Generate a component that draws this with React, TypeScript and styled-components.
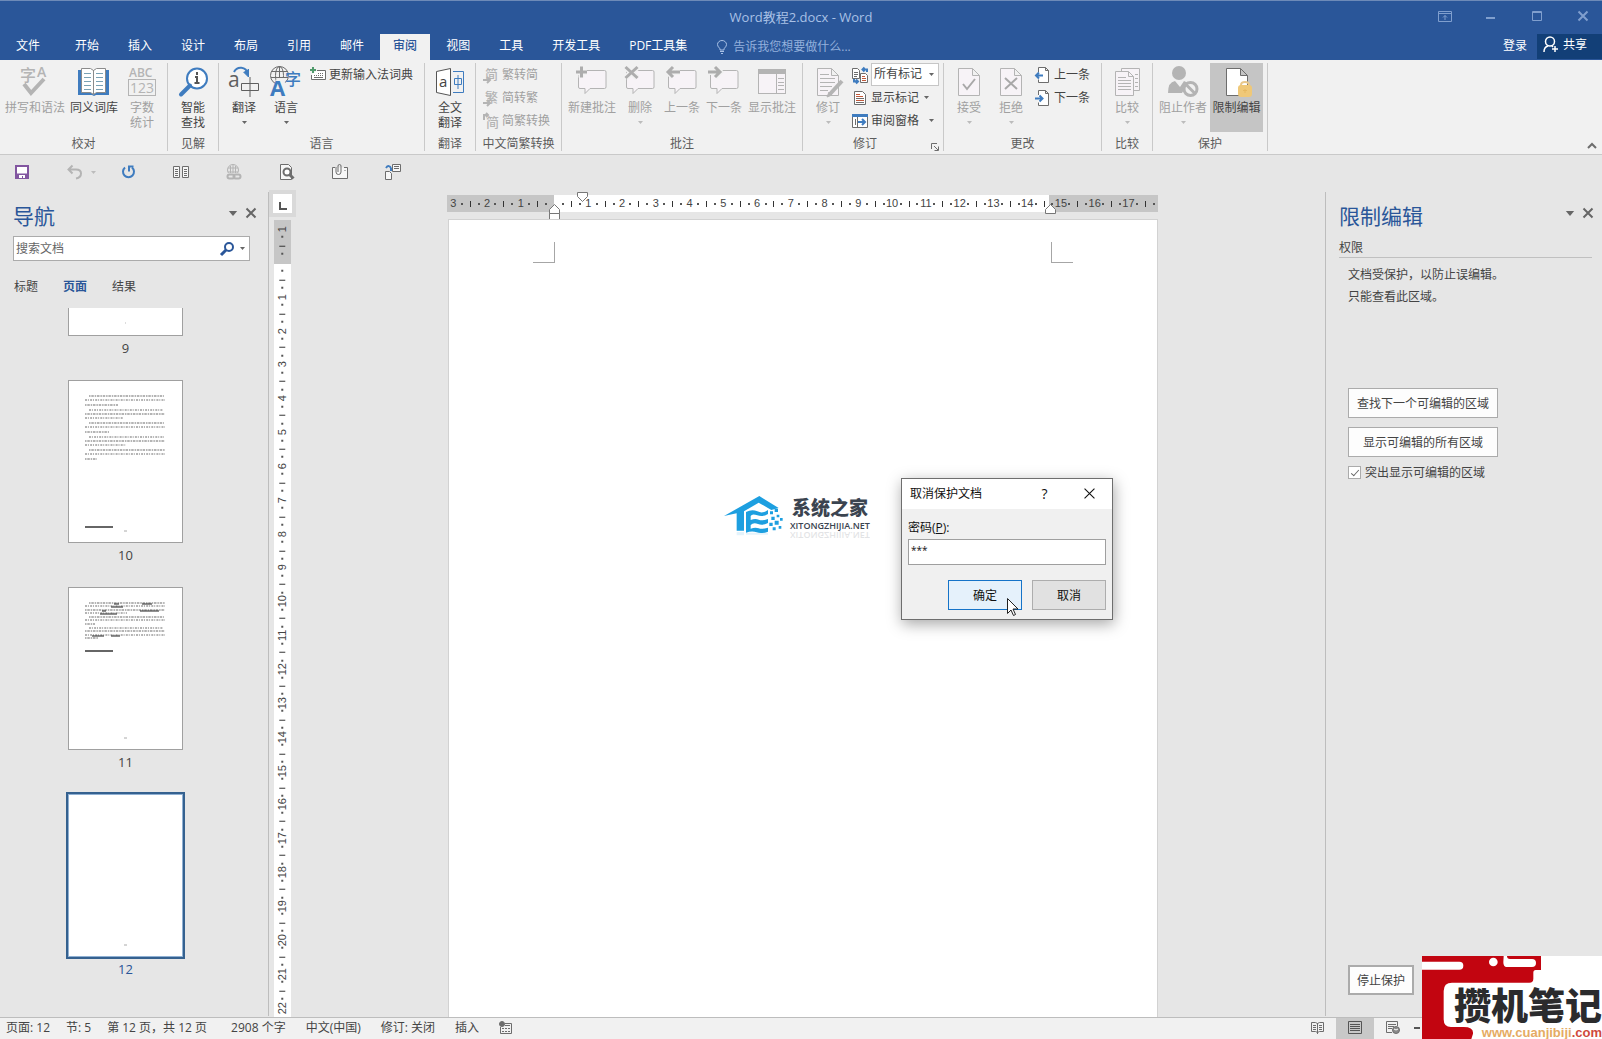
import React from "react";
import styled, { createGlobalStyle, css } from "styled-components";

const color = {
  brand: "#2a5699",
  brandDark: "#123f77",
  ribbon: "#f1f1f1",
  canvas: "#e6e6e6",
  line: "#c9c9c9",
  text: "#444444",
  muted: "#a0a0a0",
  icon: "#6d6d6d",
  iconOff: "#b4b4b4",
  blue: "#3f7cbf",
};

const uiFont = `"Open Sans", "Noto Sans CJK SC", sans-serif`;

const GlobalStyle = createGlobalStyle`
  *, *::before, *::after { box-sizing: border-box; }
  body { margin: 0; background: ${color.canvas}; }
  body, button, input, select { font-family: ${uiFont}; font-size: 12px; color: ${color.text}; }
  button { border: 0; padding: 0; background: none; line-height: 15px; }
  h1, h2, p, ul { margin: 0; padding: 0; font-weight: 400; }
  svg { display: block; flex: none; overflow: visible; }
`;

const Window = styled.div`
  position: relative;
  display: flex;
  flex-direction: column;
  height: 100vh;
  overflow: hidden;
  line-height: 15px;
`;

/* ---------- title bar and tabs ---------- */

const TitleBar = styled.header`
  display: grid;
  grid-template-columns: 1fr auto 1fr;
  align-items: center;
  height: 34px;
  flex: none;
  background: ${color.brand};
  border-top: 1px solid #6d8ab8;
`;

const WindowTitle = styled.h1`
  grid-column: 2;
  font-size: 13px;
  color: #a9c1e6;
`;

const WindowButtons = styled.div`
  display: flex;
  gap: 8px;
  justify-self: end;
  margin-bottom: 3px;
`;

const WindowButton = styled.button`
  display: grid;
  place-items: center;
  width: 38px;
  height: 28px;
  color: #809fce;
`;

const TabBar = styled.nav`
  display: flex;
  gap: 3px;
  height: 26px;
  flex: none;
  background: ${color.brand};
`;

const Tab = styled.button<{ $active?: boolean; $file?: boolean }>`
  height: 26px;
  padding: 0 13px 4px;
  color: #fff;
  ${(p) => p.$file && css`padding: 0 19px 4px 16px;`}
  ${(p) => p.$active && css`background: ${color.ribbon}; color: ${color.brand}; font-weight: 500;`}
`;

const TellMe = styled.label`
  display: flex;
  gap: 6px;
  padding: 0 0 1px 14px;
  align-items: center;
  color: #a9c1e6;
`;

const TellMeInput = styled.input`
  width: 140px;
  padding: 0;
  border: 0;
  outline: 0;
  background: transparent;
  &::placeholder { color: #93b0dc; }
`;

const Account = styled.div`
  display: flex;
  gap: 10px;
  margin-left: auto;
`;

const LoginButton = styled.button`
  padding-bottom: 4px;
  color: #fff;
`;

const ShareButton = styled.button`
  display: flex;
  gap: 4px;
  align-items: center;
  width: 65px;
  height: 25px;
  padding: 0 0 4px 6px;
  background: ${color.brandDark};
  color: #fff;
`;

/* ---------- ribbon ---------- */

const Ribbon = styled.section`
  display: flex;
  flex: none;
  height: 95px;
  background: ${color.ribbon};
  border-bottom: 1px solid ${color.line};
`;

const GroupBox = styled.div<{ $w: number }>`
  display: grid;
  grid-template-rows: 69px 15px;
  row-gap: 4px;
  width: ${(p) => p.$w}px;
  margin: 3px 0;
  border-right: 1px solid ${color.line};
`;

const GroupBody = styled.div<{ $pad?: number; $center?: boolean }>`
  display: flex;
  padding-left: ${(p) => p.$pad ?? 0}px;
  justify-content: ${(p) => (p.$center ? "center" : "flex-start")};
`;

const GroupFooter = styled.div`
  display: flex;
  align-items: center;
  color: #5c5c5c;
`;

const GroupTitle = styled.span`
  flex: 1;
  text-align: center;
  white-space: nowrap;
`;

const Launcher = styled.button`
  display: grid;
  place-items: end center;
  width: 16px;
  height: 15px;
  color: ${color.icon};
`;

const BigButton = styled.button<{ $wide?: number; $pressed?: boolean }>`
  display: flex;
  flex-direction: column;
  align-items: center;
  width: ${(p) => p.$wide ?? 42}px;
  height: 69px;
  padding-top: 3px;
  gap: 2px;
  white-space: nowrap;
  color: ${color.text};
  background: ${(p) => (p.$pressed ? "#c5c5c5" : "transparent")};
  &:disabled { color: ${color.muted}; }
`;

const ArrowSlot = styled.span`
  display: grid;
  place-items: center;
  height: 11px;
`;

const SmallStack = styled.div`
  display: flex;
  flex-direction: column;
`;

const SmallRow = styled.div`
  display: flex;
  align-items: center;
  gap: 3px;
  height: 23px;
  padding-left: 3px;
`;

const SmallButton = styled.button<{ $spread?: boolean }>`
  display: flex;
  align-items: center;
  gap: 3px;
  height: 23px;
  padding-left: 3px;
  white-space: nowrap;
  ${(p) => p.$spread && css`width: 85px;`}
  > :nth-child(3) { margin-left: ${(p) => (p.$spread ? "auto" : "2px")}; }
  &:disabled { color: ${color.muted}; }
`;

const SelectBox = styled.span`
  display: grid;
  align-items: center;
  width: 68px;
  height: 23px;
  > * { grid-area: 1 / 1; }
  > svg { justify-self: end; margin-right: 5px; pointer-events: none; }
`;

const MarkupSelect = styled.select`
  appearance: none;
  width: 68px;
  height: 23px;
  padding: 0 0 2px 2px;
  border: 1px solid #c6c6c6;
  border-radius: 0;
  background: #fff;
`;

const CollapseButton = styled.button`
  align-self: flex-end;
  margin-left: auto;
  padding: 5px;
  color: ${color.icon};
`;

/* ---------- quick access ---------- */

const QuickAccess = styled.div`
  display: flex;
  flex: none;
  height: 35px;
  padding: 0 0 1px 10px;
  align-items: center;
`;

const QuickItem = styled.div`
  display: flex;
  width: 53px;
`;

const QuickButton = styled.button<{ $narrow?: boolean }>`
  display: grid;
  place-items: center;
  width: ${(p) => (p.$narrow ? 12 : 24)}px;
  height: 24px;
`;

/* ---------- work area ---------- */

const Workspace = styled.main`
  display: grid;
  grid-template-columns: 269px 27px minmax(0, 1fr) 277px;
  flex: 1;
  min-height: 0;
`;

const NavPane = styled.aside`
  display: flex;
  flex-direction: column;
  min-height: 0;
  margin: 2px 0 1px;
  padding-left: 13px;
  border-right: 1px solid #bdbdbd;
`;

const PaneHead = styled.div<{ $inset: number }>`
  display: flex;
  align-items: flex-start;
  gap: 8px;
  padding: 9px ${(p) => p.$inset}px 0 0;
`;

const PaneTitle = styled.h2`
  flex: 1;
  font-size: 21px;
  line-height: 30px;
  color: ${color.brand};
`;

const PaneButton = styled.button`
  display: grid;
  place-items: center;
  height: 24px;
  color: #666;
`;

const SearchBox = styled.label`
  display: flex;
  align-items: center;
  gap: 5px;
  width: 237px;
  height: 25px;
  margin-top: 5px;
  padding: 0 4px 0 2px;
  border: 1px solid #ababab;
  background: #fff;
`;

const SearchInput = styled.input`
  flex: 1;
  min-width: 0;
  padding: 0;
  border: 0;
  outline: 0;
  &::placeholder { color: #666; }
`;

const NavTabs = styled.div`
  display: flex;
  gap: 25px;
  padding: 18px 0 14px 1px;
`;

const NavTab = styled.button<{ $active?: boolean }>`
  ${(p) => p.$active && css`color: ${color.brand}; font-weight: 700;`}
`;

const Thumbs = styled.ul`
  display: flex;
  flex-direction: column;
  align-items: center;
  flex: 1;
  min-height: 0;
  padding-right: 30px;
  overflow: hidden;
  list-style: none;
`;

const Thumb = styled.li<{ $current?: boolean }>`
  display: flex;
  flex-direction: column;
  flex: none;
  align-items: center;
  height: ${(p) => (p.$current ? "auto" : "207px")};
  font-size: 13px;
  line-height: 25px;
  color: ${(p) => (p.$current ? color.brand : color.text)};
  &:first-child { height: 72px; }
`;

const Sheet = styled.div<{ $cut?: boolean; $current?: boolean }>`
  width: 115px;
  height: ${(p) => (p.$cut ? 28 : 163)}px;
  background: #fff;
  border: 1px solid #a0a0a0;
  ${(p) => p.$cut && css`border-top: 0;`}
  ${(p) => p.$current && css`border-color: #8fb0d3; outline: 2px solid #35618f;`}
`;

const RulerColumn = styled.div`
  display: flex;
  flex-direction: column;
  align-items: center;
  gap: 3px;
  min-height: 0;
`;

const TabSelector = styled.button`
  display: grid;
  place-items: end center;
  flex: none;
  width: 27px;
  height: 27px;
  padding-bottom: 3px;
  border: 4px solid #d9d9d9;
  background: #fff;
`;

const VerticalRuler = styled.div`
  display: grid;
  grid-auto-rows: minmax(0, 1fr);
  flex: 1;
  min-height: 0;
  width: 17px;
  padding: 5px 0;
  background: linear-gradient(#c6c6c6 44px, #fff 44px);
`;

const HorizontalRuler = styled.div`
  position: relative;
  display: grid;
  grid-auto-flow: column;
  grid-auto-columns: minmax(0, 1fr);
  height: 17px;
  padding-left: 2px;
  background: linear-gradient(90deg, #c6c6c6 107px, #fff 107px, #fff 602px, #c6c6c6 602px);
`;

const Mark = styled.span<{ $turn?: boolean }>`
  display: flex;
  align-items: center;
  justify-content: center;
  min-width: 0;
  min-height: 0;
  font: 11px/11px "Liberation Sans", sans-serif;
  color: #444;
  ${(p) => p.$turn && css`transform: rotate(-90deg);`}
`;

const Dot = styled.i`
  width: 2px;
  height: 2px;
  background: #555;
`;

const Tick = styled.i`
  flex: none;
  width: 1px;
  height: 6px;
  background: #333;
`;

const Indent = styled.svg<{ $x: number; $y: number }>`
  position: absolute;
  left: ${(p) => p.$x}px;
  top: ${(p) => p.$y}px;
`;

const DocArea = styled.div`
  display: flex;
  flex-direction: column;
  align-items: center;
  min-height: 0;
  padding: 5px 16px 0 0;
`;

const DocColumn = styled.div`
  display: flex;
  flex-direction: column;
  flex: 1;
  gap: 7px;
  width: 711px;
`;

const Paper = styled.div`
  position: relative;
  display: flex;
  justify-content: space-between;
  align-items: flex-start;
  flex: 1;
  margin-left: 1px;
  padding: 22px 84px 0;
  background: #fff;
  border: 1px solid #d2d2d2;
  border-bottom: 0;
`;

const Corner = styled.span<{ $left?: boolean }>`
  width: 22px;
  height: 21px;
  border: 0 solid #a6a6a6;
  border-bottom-width: 1px;
  ${(p) => (p.$left ? "border-right-width: 1px;" : "border-left-width: 1px;")}
`;

const Watermark = styled.div`
  position: absolute;
  left: 275px;
  top: 276px;
  display: flex;
  gap: 6px;
  align-items: flex-start;
`;

const WatermarkText = styled.div`
  display: flex;
  flex-direction: column;
  align-items: center;
  color: #3b4450;
`;

const WatermarkName = styled.strong`
  font-size: 19px;
  line-height: 24px;
  font-weight: 900;
`;

const WatermarkSite = styled.span<{ $mirror?: boolean }>`
  font-size: 9px;
  line-height: 9px;
  font-weight: 600;
  margin-top: 1px;
  ${(p) => p.$mirror && css`transform: scaleY(-1); opacity: 0.14;`}
`;

/* ---------- protection pane ---------- */

const ProtectPane = styled.aside`
  display: flex;
  flex-direction: column;
  margin: 2px 0 1px;
  padding-left: 13px;
  border-left: 1px solid #bdbdbd;
`;

const SectionTitle = styled.h2`
  margin: 8px 10px 0 0;
  padding-bottom: 1px;
  border-bottom: 1px solid #c0c0c0;
  font-size: 12px;
  line-height: 17px;
`;

const PaneBody = styled.div`
  display: flex;
  flex-direction: column;
  align-items: flex-start;
  flex: 1;
  padding: 6px 0 21px 9px;
`;

const Note = styled.p`
  height: 124px;
  line-height: 22px;
`;

const PaneAction = styled.button<{ $strong?: boolean }>`
  width: 150px;
  height: 30px;
  margin-bottom: 9px;
  border: 1px solid #ababab;
  background: #fdfdfd;
  ${(p) => p.$strong && css`width: 66px; margin: auto 0 0; border-width: 2px;`}
`;

const CheckLabel = styled.label`
  display: flex;
  align-items: center;
  gap: 4px;
  line-height: 12px;
`;

const CheckBox = styled.input`
  appearance: none;
  display: grid;
  place-items: center;
  width: 13px;
  height: 13px;
  margin: 0;
  border: 1px solid #ababab;
  background: #fff;
  &:checked::after {
    content: "";
    width: 4px;
    height: 8px;
    margin-bottom: 2px;
    border: solid #666;
    border-width: 0 1px 1px 0;
    transform: rotate(42deg);
  }
`;

/* ---------- status bar ---------- */

const StatusBar = styled.footer`
  display: flex;
  flex: none;
  align-items: center;
  gap: 24px;
  height: 22px;
  padding-left: 6px;
  background: ${color.ribbon};
  border-top: 1px solid #bdbdbd;
  white-space: nowrap;
`;

const StatusGroup = styled.div<{ $gap: number }>`
  display: flex;
  align-items: center;
  gap: ${(p) => p.$gap}px;
  padding-bottom: 3px;
`;

const ViewButtons = styled.div`
  display: flex;
  align-items: center;
  margin-left: auto;
  padding-right: 180px;
`;

const ViewButton = styled.button<{ $active?: boolean; $small?: boolean }>`
  display: grid;
  place-items: center;
  width: ${(p) => (p.$small ? 10 : 38)}px;
  height: 21px;
  padding-bottom: 2px;
  background: ${(p) => (p.$active ? "#c8c8c8" : "transparent")};
`;

/* ---------- dialog ---------- */

const Dialog = styled.form`
  position: absolute;
  left: 901px;
  top: 478px;
  width: 212px;
  border: 1px solid #6e6e6e;
  background: #f0f0f0;
  box-shadow: 1px 4px 14px rgba(0, 0, 0, 0.35);
  color: #111;
`;

const DialogHead = styled.div`
  display: flex;
  align-items: center;
  height: 30px;
  padding: 0 9px 2px 8px;
  background: #fff;
`;

const DialogTitle = styled.h2`
  flex: 1;
  font-size: 12px;
`;

const DialogIcon = styled.button`
  display: grid;
  place-items: center;
  width: 27px;
  height: 24px;
  margin-left: 18px;
  font-size: 14px;
  color: #111;
`;

const DialogBody = styled.div`
  display: flex;
  flex-direction: column;
  padding: 11px 6px 9px;
`;

const PasswordInput = styled.input`
  height: 26px;
  margin: 4px 0 15px;
  padding: 0 2px 5px;
  border: 1px solid #9f9f9f;
  border-radius: 0;
  outline: 0;
  font-size: 10px;
  color: #111;
`;

const DialogActions = styled.div`
  display: flex;
  justify-content: flex-end;
  gap: 10px;
`;

const DialogButton = styled.button<{ $primary?: boolean }>`
  width: 74px;
  height: 30px;
  border: 1px solid ${(p) => (p.$primary ? "#1573c8" : "#adadad")};
  background: ${(p) => (p.$primary ? "#e5f1fb" : "#e1e1e1")};
  color: #111;
`;

const Pointer = styled.svg`
  position: absolute;
  left: 1006px;
  top: 597px;
`;

/* ---------- corner badge ---------- */

const Badge = styled.div`
  position: absolute;
  right: 0;
  bottom: 0;
  display: grid;
  width: 180px;
  height: 83px;
  overflow: hidden;
  background: #fff;
  > * { grid-area: 1 / 1; }
`;

const BadgeText = styled.div`
  display: flex;
  flex-direction: column;
  align-items: flex-end;
  padding-top: 29px;
  white-space: nowrap;
`;

const BadgeName = styled.strong`
  font-size: 37px;
  line-height: 41px;
  font-weight: 900;
  color: #2b2b2d;
`;

const BadgeSite = styled.span`
  font: 700 13px/14px "Liberation Sans", sans-serif;
  color: #e5ab63;
  > b { color: #cf4a3c; }
`;

/* ---------- icons ---------- */

type GlyphProps = { size?: number; children: React.ReactNode; off?: boolean };

const Glyph = ({ size = 32, off, children }: GlyphProps) => (
  <svg
    width={size}
    height={size}
    viewBox={`0 0 ${size} ${size}`}
    fill="none"
    stroke={off ? color.iconOff : color.icon}
    strokeWidth="1"
    aria-hidden="true"
  >
    {children}
  </svg>
);

const T = ({ x, y, s, f, w, children }: { x: number; y: number; s: number; f: string; w?: number; children: string }) => (
  <text x={x} y={y} fontSize={s} fill={f} stroke="none" fontWeight={w ?? 400} fontFamily={uiFont}>
    {children}
  </text>
);

const Down = ({ off, big }: { off?: boolean; big?: boolean }) => (
  <svg width={big ? 10 : 5} height={big ? 5 : 3} viewBox="0 0 10 6" aria-hidden="true">
    <path d="M0 0h10L5 6z" fill={off ? "#bcbcbc" : "#666"} />
  </svg>
);

const Cross = ({ size = 10, width = 2 }: { size?: number; width?: number }) => (
  <svg width={size} height={size} viewBox="0 0 10 10" stroke="currentColor" strokeWidth={width} aria-hidden="true">
    <path d="M.5.5l9 9M9.5.5l-9 9" />
  </svg>
);

const SpellIcon = () => (
  <Glyph off>
    <T x={1} y={15} s={16} f={color.iconOff} w={500}>字</T>
    <T x={18} y={11} s={14} f={color.iconOff} w={600}>A</T>
    <path d="M5 18l7 9 13-14" strokeWidth="4" />
  </Glyph>
);

const BookIcon = () => (
  <Glyph>
    <path d="M0 4h31v25H18l-2 1-2-1H0z" fill={color.blue} stroke="none" />
    <path d="M3.5 2.5h9l3 2 3-2h9v24h-9l-3 2-3-2h-9z" fill="#fff" stroke="#8b8b8b" />
    <path d="M15.5 4v24" stroke="#8b8b8b" />
    <path d="M6 7.500h7M6 11.500h7M6 15.500h7M6 19.500h7M6 23.500h7M18 7.500h7M18 11.500h7M18 15.500h7M18 19.500h7M18 23.500h7" stroke="#7aa2b5" />
  </Glyph>
);

const CountIcon = () => (
  <Glyph off>
    <T x={3} y={11} s={12} f={color.iconOff} w={600}>ABC</T>
    <rect x="2.500" y="13.500" width="27" height="16" />
    <T x={4} y={27} s={14} f={color.iconOff}>123</T>
  </Glyph>
);

const SmartIcon = () => (
  <Glyph>
    <circle cx="20" cy="12.500" r="10" stroke={color.blue} strokeWidth="2" fill="#fff" />
    <path d="M13 19.500L4 28.500" stroke={color.blue} strokeWidth="4" strokeLinecap="round" />
    <path d="M20 6v3M18 11h2v6M17.500 17h5" stroke="#555" strokeWidth="2" />
  </Glyph>
);

const TranslateIcon = () => (
  <Glyph>
    <T x={0} y={21} s={21} f="#5f5f5f">a</T>
    <path d="M13.500 17.500h17v7h-17zM22 11v20" stroke="#5f5f5f" />
    <path d="M6 6c3-6 12-6 14 2" stroke={color.blue} strokeWidth="2" />
    <path d="M15.500 6l5 5V3" fill={color.blue} stroke={color.blue} />
  </Glyph>
);

const LanguageIcon = () => (
  <Glyph>
    <circle cx="9.500" cy="9.500" r="9" />
    <ellipse cx="9.500" cy="9.500" rx="4" ry="9" />
    <path d="M2 5.500h15M1 11.500h17M9.500 .5v16" />
    <path d="M7 12h7l4 19H0z" fill={color.ribbon} stroke="none" />
    <T x={15} y={19} s={16} f={color.blue} w={500}>字</T>
    <T x={0} y={30} s={22} f={color.blue} w={700}>A</T>
  </Glyph>
);

const KeyboardIcon = () => (
  <Glyph size={16}>
    <path d="M7 3.500h8.500v9h-14V8" fill="#fff" />
    <path d="M4 10.500h9M4 8.500h1M6 8.500h1M8 8.500h1M10 8.500h1M12 8.500h1M8 6.500h1M10 6.500h1M12 6.500h1" />
    <path d="M0 3h6M3 0v6" stroke="#4f9a6b" strokeWidth="2" />
  </Glyph>
);

const FullTranslateIcon = () => (
  <Glyph>
    <path d="M2.500 5.500l14-3v27l-14-3z" fill="#fff" stroke="#555" />
    <T x={5} y={21} s={15} f="#444">a</T>
    <path d="M19 5.500h10.500v21H19" stroke={color.blue} />
    <path d="M20.500 12.500h7v6h-7zM24 9v14" stroke={color.blue} />
  </Glyph>
);

const HanIcon = ({ mark, swap }: { mark: string; swap?: boolean }) => (
  <Glyph size={16} off>
    <T x={swap ? 3 : 2} y={swap ? 14 : 12} s={13} f={color.iconOff} w={500}>{mark}</T>
    {swap ? (
      <path d="M1 7V2h4M3 0l2 2-2 2" strokeWidth="2" />
    ) : (
      <path d="M0 13h7M4 10l3 3-3 3" strokeWidth="2" />
    )}
  </Glyph>
);

const CommentIcon = ({ kind }: { kind: "new" | "del" | "prev" | "next" }) => {
  const marks = {
    new: "M0 6h11M5.500 0.500v11",
    del: "M1.500 1l12 11M13.500 1l-12 11",
    prev: "M2 6h12M7 1L2 6l5 5",
    next: "M0 6h12M7 1l5 5-5 5",
  };
  return (
    <Glyph off>
      <path d="M3.500 4.500h25q1.500 0 1.500 1.500v15q0 1.500-1.500 1.500H14l-5 5v-5H4q-1.500 0-1.500-1.500V6q0-1.500 1-1.500z" fill="#f7f3f7" />
      <path d={marks[kind]} stroke={color.ribbon} strokeWidth="6" />
      <path d={marks[kind]} stroke="#adadad" strokeWidth="3" />
    </Glyph>
  );
};

const ShowCommentsIcon = () => (
  <Glyph off>
    <rect x="2.500" y="3.500" width="27" height="24" fill="#f7f3f7" />
    <path d="M2 5.500h28" strokeWidth="5" />
    <path d="M20.500 8v19M22 12.500h6M22 16.500h6M22 19.500h6M22 23.500h6" />
  </Glyph>
);

const docShape = "M5.500 2.500h14l7 7v20h-21zM19.500 2.500v7h7";

const TrackIcon = () => (
  <Glyph off>
    <path d={docShape} fill="#f7f3f7" />
    <path d="M8 8.500h9M8 12.500h15M8 16.500h15M8 20.500h12M8 24.500h8" />
    <path d="M30 15L18 28" strokeWidth="4" />
    <path d="M17 26l-2 5 5-2z" fill={color.iconOff} />
  </Glyph>
);

const VerdictIcon = ({ ok }: { ok?: boolean }) => (
  <Glyph off>
    <path d={docShape} fill="#f7f3f7" />
    <path d={ok ? "M10 18l4 5 8-10" : "M10 12l12 11M22 12L10 23"} stroke="#a8a8a8" strokeWidth="2" />
  </Glyph>
);

const CompareIcon = () => (
  <Glyph off>
    <path d="M10.500 2.500h18v22h-18z" fill="#f7f3f7" />
    <path d="M4.500 5.500h13l5 5v19h-18zM17.500 5.500v5h5" fill="#f7f3f7" />
    <path d="M7 11.500h8M7 14.500h13M7 17.500h13M7 20.500h13M7 23.500h13M24 8.500h3M24 12.500h3M24 16.500h3M24 20.500h3" />
  </Glyph>
);

const BlockIcon = () => (
  <Glyph off>
    <circle cx="12" cy="7" r="7" fill={color.iconOff} stroke="none" />
    <path d="M1 27q0-11 7-12l5 6 4-6 4 2-6 10z" fill={color.iconOff} stroke="none" />
    <circle cx="23.500" cy="23" r="6.500" fill={color.ribbon} strokeWidth="3" />
    <path d="M19 18.500l9 9" strokeWidth="3" />
  </Glyph>
);

const RestrictIcon = () => (
  <Glyph>
    <path d={docShape} fill="#fff" />
    <path d="M20 20v-1q0-3 4-3t4 3v1" stroke="#e9c88a" strokeWidth="2" />
    <rect x="17" y="19" width="14" height="12" rx="3" fill="#efc878" stroke="none" />
    <path d="M24 23v4M22 24.500h4" stroke="#e6b860" />
  </Glyph>
);

const MarkupIcon = () => (
  <Glyph size={16}>
    <path d="M.5 1.500h5l2 2v8h-7zM8.500 6.500h5l2 2v7h-7z" fill="#fff" />
    <path d="M2 5.500h4M2 7.500h4M2 9.500h3" />
    <path d="M10 9.500h3M10 11.500h4M10 13.500h4" stroke="#c0583a" />
    <path d="M15 5V2.500h-4M12.500.5l-2 2 2 2M2 12v2.500h3M4 12.500l2 2-2 2" stroke={color.blue} strokeWidth="2" />
  </Glyph>
);

const ShowMarkupIcon = () => (
  <Glyph size={16}>
    <path d="M2.500 1.500h8l3 3v10h-11z" fill="#fff" />
    <path d="M4 4.500h4M4 6.500h7M4 10.500h8" stroke="#c0583a" />
    <path d="M4 8.500h8M4 12.500h8" />
  </Glyph>
);

const PaneIcon = () => (
  <Glyph size={16}>
    <path d="M.5 1.500h15v13H.5z" fill="#fff" />
    <path d="M0 2.500h16" stroke={color.blue} strokeWidth="3" />
    <path d="M3.500 6v6M5.500 4v10" />
    <path d="M6 9h7M10 6l3 3-3 3" stroke={color.blue} strokeWidth="2" />
  </Glyph>
);

const ChangeIcon = ({ next }: { next?: boolean }) => (
  <Glyph size={16}>
    <path d="M3.500 5V.5h7l3 3v12h-10v-3M10.500.5v3h3" fill="#fff" />
    <path d={next ? "M0 8.500h7M4.500 5.500l3 3-3 3" : "M1 8.500h7M4 5.500l-3 3 3 3"} stroke={color.blue} strokeWidth="2" />
  </Glyph>
);

const LauncherIcon = () => (
  <Glyph size={8}>
    <path d="M.5 6V.5H6M3 3l4 4M7.500 3.500v4h-4" />
  </Glyph>
);

const SearchIcon = () => (
  <Glyph size={16}>
    <circle cx="10" cy="6" r="4" stroke={color.brand} strokeWidth="2" />
    <path d="M7 9l-5 5" stroke={color.brand} strokeWidth="3" />
  </Glyph>
);

const quickIcons: Record<string, React.ReactNode> = {
  保存: (
    <Glyph size={16}>
      <path d="M2 2h12v12H2z" fill="#fff" stroke="#8256a0" strokeWidth="2" />
      <path d="M2 9.500h12V14H2z" fill="#8256a0" stroke="none" />
      <path d="M5 11h6v3H9v-2H8v2H5z" fill="#fff" stroke="none" />
    </Glyph>
  ),
  重复: (
    <Glyph size={16}>
      <path d="M5 3.500a5.500 5.500 0 1 0 7 0" stroke={color.blue} strokeWidth="2" />
      <path d="M13.500 2.500H9v5" stroke={color.blue} strokeWidth="2" />
    </Glyph>
  ),
  并排: (
    <Glyph size={16}>
      <path d="M.5 2.500h6v11h-6zM9.500 2.500h6v11h-6z" fill="#f7f7f7" />
      <path d="M2 5.500h3M2 7.500h3M2 9.500h3M2 11.500h3M11 5.500h3M11 7.500h3M11 9.500h3M11 11.500h3" />
    </Glyph>
  ),
  超链接: (
    <Glyph size={16} off>
      <circle cx="7" cy="6" r="5.500" />
      <path d="M2 4h10M2 8h10M7 .5v11M4.500 2v8M9.500 2v8" />
      <path d="M1 9h14v7H1z" fill={color.canvas} stroke="none" />
      <rect x="1.500" y="10.500" width="7" height="4" rx="2" strokeWidth="2" />
      <rect x="7.500" y="10.500" width="7" height="4" rx="2" strokeWidth="2" />
    </Glyph>
  ),
  打印预览: (
    <Glyph size={16}>
      <path d="M1.500.5h8l3 3v12h-11z" fill="#f7f7f7" />
      <circle cx="8" cy="8" r="3.500" fill="#fff" strokeWidth="2" />
      <path d="M10.500 10.500l4 4" strokeWidth="3" />
    </Glyph>
  ),
  附件: (
    <Glyph size={16}>
      <path d="M3 3.500H.5v11h15v-11H12" fill="#f7f7f7" />
      <path d="M4 3v5a2.500 2.500 0 0 0 5 0V2a1.500 1.500 0 0 0-3 0v6M12.500 6.500h1" />
    </Glyph>
  ),
  比较文档: (
    <Glyph size={16}>
      <path d="M7.500.5h8v7h-8zM9 2.500h5M9 4.500h5M.5 7.500h4l2 2v6h-6z" fill="#f7f7f7" />
      <path d="M1 4c2-3 4-2 5 0" stroke={color.blue} strokeWidth="2" />
      <path d="M6 4v3" stroke={color.blue} strokeWidth="2" />
    </Glyph>
  ),
};

const UndoIcon = () => (
  <Glyph size={16} off>
    <path d="M5.500 1.500l-4 4 4 4M2 5.500h7q5 0 5 4t-5 5" strokeWidth="2" />
  </Glyph>
);

/* ---------- composed parts ---------- */

type BigProps = { icon: React.ReactNode; lines: string[]; off?: boolean; wide?: number; arrow?: boolean; pressed?: boolean };

const Big = ({ icon, lines, off, wide, arrow, pressed }: BigProps) => (
  <BigButton type="button" disabled={off} $wide={wide} $pressed={pressed} aria-pressed={pressed}>
    {icon}
    <span>
      {lines.map((line, i) => (
        <React.Fragment key={line}>
          {i > 0 && <br />}
          {line}
        </React.Fragment>
      ))}
    </span>
    {arrow && (
      <ArrowSlot>
        <Down off={off} />
      </ArrowSlot>
    )}
  </BigButton>
);

type GroupProps = { title: string; w: number; pad?: number; center?: boolean; launcher?: boolean; children: React.ReactNode };

const Group = ({ title, w, pad, center, launcher, children }: GroupProps) => (
  <GroupBox $w={w} role="group" aria-label={title}>
    <GroupBody $pad={pad} $center={center}>{children}</GroupBody>
    <GroupFooter>
      <GroupTitle>{title}</GroupTitle>
      {launcher && (
        <Launcher type="button" aria-label="修订选项">
          <LauncherIcon />
        </Launcher>
      )}
    </GroupFooter>
  </GroupBox>
);

/* One mark per quarter unit: a number, a dot, a tick, a dot. */
const rulerMarks = (from: number, count: number, turn?: boolean) =>
  Array.from({ length: count }, (_, i) => {
    const q = from + i;
    const phase = ((q % 4) + 4) % 4;
    return (
      <Mark key={q} $turn={turn}>
        {phase === 0 ? (q === 0 ? "" : Math.abs(q / 4)) : phase === 2 ? <Tick /> : <Dot />}
      </Mark>
    );
  });

type Line = [number, number, number];

const fullPage: Line[] = [
  [21, 96, 15], [17, 97, 19], [17, 50, 24], [21, 95, 29], [17, 97, 33], [17, 55, 37], [21, 96, 42], [17, 97, 46],
  [17, 41, 51], [21, 96, 56], [17, 97, 60], [17, 58, 64], [21, 97, 69], [17, 97, 73], [17, 29, 78],
];
const halfPage: Line[] = [
  [21, 97, 15], [17, 97, 18], [17, 97, 22], [17, 59, 25], [21, 96, 29], [17, 97, 32], [17, 27, 36], [21, 95, 40],
  [17, 97, 43], [17, 97, 47], [17, 30, 50],
];

const PagePreview = ({ lines, rule, foot, bold = [] }: { lines: Line[]; rule?: number; foot: number; bold?: Line[] }) => (
  <svg width="113" height="161" viewBox="1 0 113 161" aria-hidden="true">
    {lines.map(([a, b, y], i) => (
      <path key={y} d={`M${a} ${y}H${b}`} stroke="#6a6a6a" strokeWidth="1.200" strokeDasharray={i % 2 ? "2 .9 1 1.200" : "1.500 .8 2.500 .9"} />
    ))}
    {bold.map(([a, b, y]) => (
      <path key={`${a}-${y}`} d={`M${a} ${y}H${b}`} stroke="#222" strokeWidth="1" />
    ))}
    {rule && <path d={`M17 ${rule}h28`} stroke="#000" strokeWidth="1.200" />}
    <path d={`M56 ${foot}h3`} stroke="#aaa" strokeWidth="1" />
  </svg>
);

const tabs = ["文件", "开始", "插入", "设计", "布局", "引用", "邮件", "审阅", "视图", "工具", "开发工具", "PDF工具集"];

export default function App() {
  return (
    <Window>
      <GlobalStyle />
      <TitleBar>
        <WindowTitle>Word教程2.docx - Word</WindowTitle>
        <WindowButtons>
          <WindowButton type="button" aria-label="功能区显示选项">
            <svg width="14" height="11" viewBox="0 0 14 11" fill="none" stroke="currentColor">
              <path d="M.5.5h13v10H.5zM.5 2.500h13M7 9V4.500M5 6.500l2-2 2 2" />
            </svg>
          </WindowButton>
          <WindowButton type="button" aria-label="最小化">
            <svg width="10" height="6" viewBox="0 0 10 6" stroke="currentColor" strokeWidth="2"><path d="M0 5h9" /></svg>
          </WindowButton>
          <WindowButton type="button" aria-label="最大化">
            <svg width="10" height="10" viewBox="0 0 10 10" fill="none" stroke="currentColor"><path d="M.5.5h9v9h-9zM0 1.500h10" /></svg>
          </WindowButton>
          <WindowButton type="button" aria-label="关闭">
            <Cross />
          </WindowButton>
        </WindowButtons>
      </TitleBar>

      <TabBar>
        {tabs.map((t, i) => (
          <Tab key={t} type="button" $file={i === 0} $active={t === "审阅"}>{t}</Tab>
        ))}
        <TellMe>
          <svg width="10" height="14" viewBox="0 0 10 14" fill="none" stroke="currentColor" aria-hidden="true">
            <path d="M3 10V8.500Q.5 7 .5 4.500a4.500 4 0 0 1 9 0Q9.500 7 7 8.500V10zM3 11.500h4M4 13.500h2" />
          </svg>
          <TellMeInput placeholder="告诉我您想要做什么..." aria-label="告诉我您想要做什么" />
        </TellMe>
        <Account>
          <LoginButton type="button">登录</LoginButton>
          <ShareButton type="button">
            <svg width="16" height="17" viewBox="0 0 16 17" fill="none" stroke="#fff" strokeWidth="1.500" aria-hidden="true">
              <circle cx="7" cy="5.500" r="4.500" />
              <path d="M1 16q0-5 4-6M9 10l1 1M12 10v6M9 13h6" />
            </svg>
            共享
          </ShareButton>
        </Account>
      </TabBar>

      <Ribbon>
        <Group title="校对" w={168} pad={3}>
          <Big icon={<SpellIcon />} lines={["拼写和语法"]} off wide={64} />
          <Big icon={<BookIcon />} lines={["同义词库"]} wide={54} />
          <Big icon={<CountIcon />} lines={["字数", "统计"]} off />
        </Group>
        <Group title="见解" w={51} center>
          <Big icon={<SmartIcon />} lines={["智能", "查找"]} />
        </Group>
        <Group title="语言" w={206} pad={4}>
          <Big icon={<TranslateIcon />} lines={["翻译"]} arrow />
          <Big icon={<LanguageIcon />} lines={["语言"]} arrow />
          <SmallStack>
            <SmallButton type="button"><KeyboardIcon /><span>更新输入法词典</span></SmallButton>
          </SmallStack>
        </Group>
        <Group title="翻译" w={51} center>
          <Big icon={<FullTranslateIcon />} lines={["全文", "翻译"]} />
        </Group>
        <Group title="中文简繁转换" w={86} pad={4}>
          <SmallStack>
            <SmallButton type="button" disabled><HanIcon mark="简" /><span>繁转简</span></SmallButton>
            <SmallButton type="button" disabled><HanIcon mark="繁" /><span>简转繁</span></SmallButton>
            <SmallButton type="button" disabled><HanIcon mark="简" swap /><span>简繁转换</span></SmallButton>
          </SmallStack>
        </Group>
        <Group title="批注" w={241} pad={3}>
          <Big icon={<CommentIcon kind="new" />} lines={["新建批注"]} off wide={54} />
          <Big icon={<CommentIcon kind="del" />} lines={["删除"]} off arrow />
          <Big icon={<CommentIcon kind="prev" />} lines={["上一条"]} off />
          <Big icon={<CommentIcon kind="next" />} lines={["下一条"]} off />
          <Big icon={<ShowCommentsIcon />} lines={["显示批注"]} off wide={54} />
        </Group>
        <Group title="修订" w={141} pad={4} launcher>
          <Big icon={<TrackIcon />} lines={["修订"]} off arrow />
          <SmallStack>
            <SmallRow>
              <MarkupIcon />
              <SelectBox>
                <MarkupSelect aria-label="显示以供审阅">
                  <option>所有标记</option>
                </MarkupSelect>
                <Down />
              </SelectBox>
            </SmallRow>
            <SmallButton type="button"><ShowMarkupIcon /><span>显示标记</span><Down /></SmallButton>
            <SmallButton type="button" $spread><PaneIcon /><span>审阅窗格</span><Down /></SmallButton>
          </SmallStack>
        </Group>
        <Group title="更改" w={158} pad={4}>
          <Big icon={<VerdictIcon ok />} lines={["接受"]} off arrow />
          <Big icon={<VerdictIcon />} lines={["拒绝"]} off arrow />
          <SmallStack>
            <SmallButton type="button"><ChangeIcon /><span>上一条</span></SmallButton>
            <SmallButton type="button"><ChangeIcon next /><span>下一条</span></SmallButton>
          </SmallStack>
        </Group>
        <Group title="比较" w={51} center>
          <Big icon={<CompareIcon />} lines={["比较"]} off arrow />
        </Group>
        <Group title="保护" w={115} pad={3}>
          <Big icon={<BlockIcon />} lines={["阻止作者"]} off wide={54} arrow />
          <Big icon={<RestrictIcon />} lines={["限制编辑"]} wide={53} pressed />
        </Group>
        <CollapseButton type="button" aria-label="折叠功能区">
          <svg width="10" height="6" viewBox="0 0 10 6" fill="none" stroke="currentColor" strokeWidth="2"><path d="M1 5l4-4 4 4" /></svg>
        </CollapseButton>
      </Ribbon>

      <QuickAccess>
        <QuickItem>
          <QuickButton type="button" aria-label="保存">{quickIcons["保存"]}</QuickButton>
        </QuickItem>
        <QuickItem>
          <QuickButton type="button" aria-label="撤消" disabled><UndoIcon /></QuickButton>
          <QuickButton type="button" aria-label="撤消列表" disabled $narrow><Down off /></QuickButton>
        </QuickItem>
        {Object.keys(quickIcons).slice(1).map((name) => (
          <QuickItem key={name}>
            <QuickButton type="button" aria-label={name}>{quickIcons[name]}</QuickButton>
          </QuickItem>
        ))}
      </QuickAccess>

      <Workspace>
        <NavPane>
          <PaneHead $inset={12}>
            <PaneTitle>导航</PaneTitle>
            <PaneButton type="button" aria-label="窗格选项"><Down big /></PaneButton>
            <PaneButton type="button" aria-label="关闭导航"><Cross /></PaneButton>
          </PaneHead>
          <SearchBox>
            <SearchInput placeholder="搜索文档" aria-label="搜索文档" />
            <SearchIcon />
            <Down />
          </SearchBox>
          <NavTabs>
            <NavTab type="button">标题</NavTab>
            <NavTab type="button" $active>页面</NavTab>
            <NavTab type="button">结果</NavTab>
          </NavTabs>
          <Thumbs>
            <Thumb>
              <Sheet $cut><svg width="113" height="27" viewBox="1 0 113 27"><path d="M57 15h1" stroke="#bbb" /></svg></Sheet>
              9
            </Thumb>
            <Thumb>
              <Sheet><PagePreview lines={fullPage} rule={146} foot={150} /></Sheet>
              10
            </Thumb>
            <Thumb>
              <Sheet>
                <PagePreview
                  lines={halfPage}
                  rule={63}
                  foot={150}
                  bold={[[46, 51, 16], [74, 84, 16], [43, 55, 19], [34, 38, 23], [72, 91, 23], [32, 49, 26], [24, 36, 48], [43, 52, 48]]}
                />
              </Sheet>
              11
            </Thumb>
            <Thumb $current>
              <Sheet $current><PagePreview lines={[]} foot={150} /></Sheet>
              12
            </Thumb>
          </Thumbs>
        </NavPane>

        <RulerColumn>
          <TabSelector type="button" aria-label="制表符">
            <svg width="8" height="8" viewBox="0 0 8 8" fill="none" stroke="#555" strokeWidth="2"><path d="M1 0v7h7" /></svg>
          </TabSelector>
          <VerticalRuler aria-hidden="true">{rulerMarks(-4, 93, true)}</VerticalRuler>
        </RulerColumn>

        <DocArea>
          <DocColumn>
            <HorizontalRuler aria-hidden="true">
              {rulerMarks(-12, 84)}
              <Indent $x={130} $y={-3} width="11" height="10" fill="#fff" stroke="#777">
                <path d="M.5.5h10v4l-5 5-5-5z" />
              </Indent>
              <Indent $x={102} $y={9} width="11" height="17" fill="#fff" stroke="#777">
                <path d="M5.500.5l5 5v4H.5v-4zM.5 9.500h10v6H.5z" />
              </Indent>
              <Indent $x={598} $y={9} width="11" height="11" fill="#fff" stroke="#777">
                <path d="M5.500.5l5 5v4H.5v-4z" />
              </Indent>
            </HorizontalRuler>
            <Paper>
              <Corner $left />
              <Corner />
              <Watermark>
                <svg width="60" height="42" viewBox="0 0 180 126" aria-label="系统之家">
                  <g fill="#1d9fe0">
                    <path d="M0 60L106 0l58 36-22 6-38-22-44 26v58H38V52z" />
                    <path d="M66 48q18-10 34-2t32-4v12q-16 10-32 4t-20 2v12q14-6 24-1t28-2v12q-16 8-30 3t-22 3v11q14-5 24-1t28-2v12q-20 7-34 2t-32 1z" />
                    <path d="M138 46h9v9h-9zM152 38h10v10h-10zM142 62h10v10h-10zM158 56h8v8h-8zM136 80h10v10h-10zM152 74h12v12h-12zM168 66h8v8h-8zM146 94h9v9h-9zM164 90h8v8h-8z" />
                  </g>
                  <path d="M38 108h22v10H38zM66 110h66v6H66z" fill="#1d9fe0" opacity=".12" />
                </svg>
                <WatermarkText>
                  <WatermarkName>系统之家</WatermarkName>
                  <WatermarkSite>XITONGZHIJIA.NET</WatermarkSite>
                  <WatermarkSite $mirror aria-hidden="true">XITONGZHIJIA.NET</WatermarkSite>
                </WatermarkText>
              </Watermark>
            </Paper>
          </DocColumn>
        </DocArea>

        <ProtectPane>
          <PaneHead $inset={9}>
            <PaneTitle>限制编辑</PaneTitle>
            <PaneButton type="button" aria-label="窗格选项"><Down big /></PaneButton>
            <PaneButton type="button" aria-label="关闭限制编辑"><Cross /></PaneButton>
          </PaneHead>
          <SectionTitle>权限</SectionTitle>
          <PaneBody>
            <Note>文档受保护，以防止误编辑。<br />只能查看此区域。</Note>
            <PaneAction type="button">查找下一个可编辑的区域</PaneAction>
            <PaneAction type="button">显示可编辑的所有区域</PaneAction>
            <CheckLabel>
              <CheckBox type="checkbox" defaultChecked />
              突出显示可编辑的区域
            </CheckLabel>
            <PaneAction type="button" $strong>停止保护</PaneAction>
          </PaneBody>
        </ProtectPane>
      </Workspace>

      <StatusBar>
        <StatusGroup $gap={16}>
          <span>页面: 12</span>
          <span>节: 5</span>
          <span>第 12 页，共 12 页</span>
        </StatusGroup>
        <StatusGroup $gap={20}>
          <span>2908 个字</span>
          <span>中文(中国)</span>
          <span>修订: 关闭</span>
          <span>插入</span>
          <svg width="13" height="13" viewBox="0 0 13 13" fill="none" stroke={color.icon} aria-hidden="true">
            <path d="M6 2.500h6.500v10H1.500V6M3 7.500h2M6 7.500h2M9 7.500h2M3 10.500h2M6 10.500h2M9 10.500h2M6 4.500h5" />
            <circle cx="3" cy="3" r="2.500" fill={color.icon} />
          </svg>
        </StatusGroup>
        <ViewButtons>
          <ViewButton type="button" aria-label="阅读视图">
            <svg width="13" height="13" viewBox="0 0 13 13" fill="none" stroke={color.icon}>
              <path d="M.5 1.500h4l2 1 2-1h4v9h-4l-2 1-2-1h-4zM6.500 2v11M2 4.500h3M2 6.500h3M2 8.500h3M8 4.500h3M8 6.500h3M8 8.500h3" />
            </svg>
          </ViewButton>
          <ViewButton type="button" aria-label="页面视图" $active>
            <svg width="14" height="13" viewBox="0 0 14 13" fill="none" stroke="#555">
              <path d="M.5.5h13v12H.5zM2 3.500h10M2 5.500h10M2 7.500h10M2 9.500h10" />
            </svg>
          </ViewButton>
          <ViewButton type="button" aria-label="Web 版式视图">
            <svg width="14" height="13" viewBox="0 0 14 13" fill="none" stroke={color.icon}>
              <path d="M11.500 5V.5H.5v11H6M2 3.500h8M2 5.500h6M2 7.500h4" />
              <circle cx="10" cy="9" r="3.500" fill="#8a8a8a" />
              <path d="M8 8l2 1 2-1" stroke="#fff" />
            </svg>
          </ViewButton>
          <ViewButton type="button" aria-label="缩小" $small>
            <svg width="6" height="2" viewBox="0 0 6 2"><path d="M0 0h6v2H0z" fill="#555" /></svg>
          </ViewButton>
        </ViewButtons>
      </StatusBar>

      <Dialog role="dialog" aria-label="取消保护文档" onSubmit={(e) => e.preventDefault()}>
        <DialogHead>
          <DialogTitle>取消保护文档</DialogTitle>
          <DialogIcon type="button">?</DialogIcon>
          <DialogIcon type="button" aria-label="关闭"><Cross size={11} width={1} /></DialogIcon>
        </DialogHead>
        <DialogBody>
          <label htmlFor="password">密码(<u>P</u>):</label>
          <PasswordInput id="password" type="text" defaultValue="***" autoComplete="off" />
          <DialogActions>
            <DialogButton type="submit" $primary>确定</DialogButton>
            <DialogButton type="button">取消</DialogButton>
          </DialogActions>
        </DialogBody>
      </Dialog>
      <Pointer width="13" height="20" viewBox="0 0 13 20" fill="#fff" stroke="#222" aria-hidden="true">
        <path d="M1.500 1.500v15l3.500-3.500 2.500 5.500 2-1-2.500-5.500h5z" />
      </Pointer>

      <Badge>
        <svg width="180" height="83" viewBox="0 0 540 249" aria-hidden="true">
          <path d="M0 0h357v42h-16q-7 0-7 8v18q0 12-12 12H90q-25 0-25 25v85q0 23 22 23h38q30 0 28 20l-5 16H0z" fill="#c20510" />
          <path d="M0 17h112a12 12 0 0 1 0 24H0zM245 0h10q0 9 9 9h66a12 12 0 0 1 0 24h-76q-10 0-10-14z" fill="#fff" />
          <circle cx="214" cy="18" r="13" fill="#fff" />
        </svg>
        <BadgeText>
          <BadgeName>攒机笔记</BadgeName>
          <BadgeSite>www.cuanjibiji<b>.com</b></BadgeSite>
        </BadgeText>
      </Badge>
    </Window>
  );
}
